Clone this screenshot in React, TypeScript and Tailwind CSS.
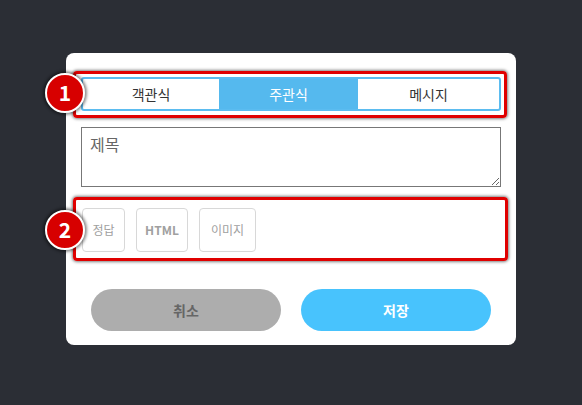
import React from "react";

const font = { fontFamily: '"Noto Sans CJK KR", "Noto Sans", sans-serif' };

function Badge({ n, top }: { n: string; top: number }) {
  return (
    <div
      className="absolute left-[-21px] w-[40px] h-[40px] rounded-full bg-[#d70000] border-2 border-white flex items-center justify-center text-white text-[21px] font-bold shadow-[0_0_3px_2px_rgba(0,0,0,0.45)]"
      style={{ top }}
    >
      {n}
    </div>
  );
}

export default function App() {
  return (
    <div className="w-[582px] h-[405px] bg-[#2b2e35] pt-[53px] pl-[66px]" style={font}>
      <div className="relative w-[450px] h-[292px] bg-white rounded-[8px] px-[15px] pt-[24px]">
        <div className="flex h-[34px] border-2 border-[#5bbcf0] rounded-[3px] text-[14px] text-[#333]">
          <div className="w-[136px] flex items-center justify-center">객관식</div>
          <div className="w-[139px] flex items-center justify-center bg-[#55b9ee] text-white">주관식</div>
          <div className="flex-1 flex items-center justify-center">메시지</div>
        </div>
        <textarea
          className="mt-[16px] block w-[420px] h-[60px] border border-[#777] px-[8px] py-[4px] text-[16px] text-[#555] placeholder-[#666] outline-none resize-y"
          placeholder="제목"
          style={font}
        />
        <div className="mt-[21px] flex gap-[11px] pl-[1px] text-[12px] text-[#a0a0a0]">
          <div className="w-[43px] h-[44px] border border-[#d8d8d8] rounded-[4px] flex items-center justify-center">정답</div>
          <div className="w-[52px] h-[44px] border border-[#d8d8d8] rounded-[4px] flex items-center justify-center font-bold">HTML</div>
          <div className="w-[57px] h-[44px] border border-[#d8d8d8] rounded-[4px] flex items-center justify-center">이미지</div>
        </div>
        <div className="mt-[37px] flex gap-[20px] pl-[10px] text-[14px] font-bold">
          <div className="w-[190px] h-[42px] rounded-full bg-[#adadad] text-[#666] flex items-center justify-center">취소</div>
          <div className="w-[190px] h-[42px] rounded-full bg-[#48c3fd] text-white flex items-center justify-center">저장</div>
        </div>

        <div className="absolute left-[7px] top-[18px] w-[434px] h-[47px] border-[3px] border-[#e00000] rounded-[4px] shadow-[0_0_3px_1px_rgba(0,0,0,0.5)] pointer-events-none" />
        <div className="absolute left-[7px] top-[144px] w-[435px] h-[64px] border-[3px] border-[#e00000] rounded-[4px] shadow-[0_0_3px_1px_rgba(0,0,0,0.5)] pointer-events-none" />
        <Badge n="1" top={20} />
        <Badge n="2" top={157} />
      </div>
    </div>
  );
}
